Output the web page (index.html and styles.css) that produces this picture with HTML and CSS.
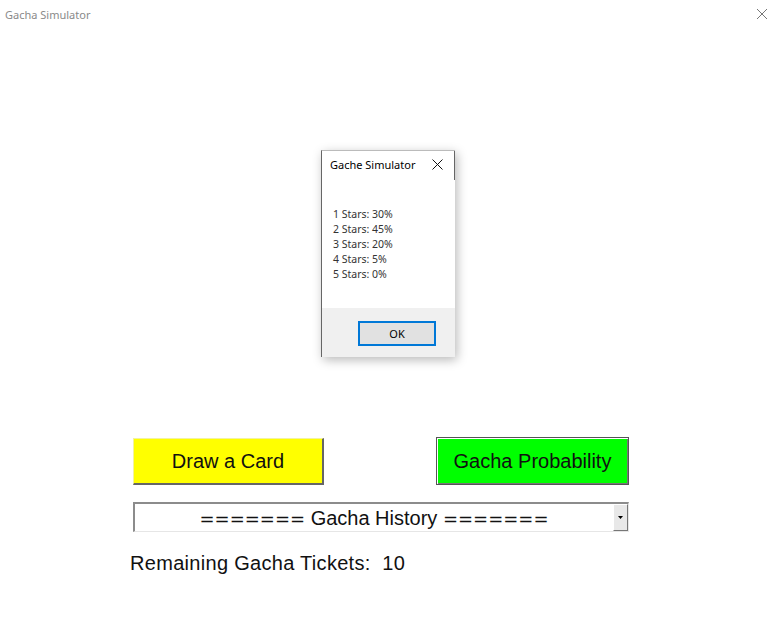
FILE: index.html
```html
<!DOCTYPE html>
<html>
<head>
<meta charset="utf-8">
<title>Gacha Simulator</title>
<link rel="stylesheet" href="styles.css">
</head>
<body>
<div class="window">
  <div class="titlebar">
    <span class="title">Gacha Simulator</span>
    <svg class="close" width="12" height="12" viewBox="0 0 12 12"><path d="M1 1L11 11M11 1L1 11" stroke="#777" stroke-width="1" fill="none"/></svg>
  </div>
  <div class="content">
    <div class="controls">
      <div class="btn-row">
        <button class="btn btn-draw">Draw a Card</button>
        <button class="btn btn-prob">Gacha Probability</button>
      </div>
      <div class="combo">
        <span class="combo-text"><span class="eq">=======</span> Gacha History <span class="eq">=======</span></span>
        <span class="combo-arrow"><svg width="5" height="3" viewBox="0 0 5 3"><path d="M0 0H5L2.5 3Z" fill="#000"/></svg></span>
      </div>
      <div class="tickets">Remaining Gacha Tickets:&nbsp;&nbsp;10</div>
    </div>
  </div>

  <div class="dialog">
    <div class="dlg-title">
      <span>Gache Simulator</span>
      <svg class="dlg-close" width="11" height="11" viewBox="0 0 11 11"><path d="M0.5 0.5L10.5 10.5M10.5 0.5L0.5 10.5" stroke="#111" stroke-width="1" fill="none"/></svg>
    </div>
    <div class="dlg-body">
      <div>1 Stars: 30%</div>
      <div>2 Stars: 45%</div>
      <div>3 Stars: 20%</div>
      <div>4 Stars: 5%</div>
      <div>5 Stars: 0%</div>
    </div>
    <div class="dlg-footer">
      <button class="ok">OK</button>
    </div>
  </div>
</div>
</body>
</html>
```
FILE: styles.css
```css
html, body {
  margin: 0;
  padding: 0;
  background: #fff;
}
.window {
  position: relative;
  width: 775px;
  height: 625px;
  background: #fff;
  overflow: hidden;
}
.titlebar {
  height: 28px;
  display: flex;
  align-items: center;
  justify-content: space-between;
  padding: 0 7px 0 5px;
}
.title {
  font-family: "Noto Sans", sans-serif;
  font-size: 11px;
  color: #8a8a8a;
}
.close {
  display: block;
}
.content {
  padding-top: 410px;
  padding-left: 133px;
}
.controls {
  width: 496px;
}
.btn-row {
  display: flex;
  justify-content: space-between;
  align-items: flex-start;
}
.btn {
  font-family: "Liberation Sans", Arial, sans-serif;
  font-size: 20px;
  color: #111;
  padding: 0;
  margin: 0;
  cursor: pointer;
}
.btn-draw {
  width: 191px;
  height: 47px;
  background: #ffff00;
  border: none;
  border-top: 1px solid #f2f2a0;
  border-left: 1px solid #f2f2a0;
  border-right: 2px solid #666;
  border-bottom: 2px solid #666;
}
.btn-prob {
  width: 193px;
  height: 48px;
  margin-top: -1px;
  background: #00ff00;
  border: 1px solid #555;
  box-shadow: inset 1px 1px 0 #fff, inset -1px -1px 0 #777;
}
.combo {
  margin-top: 17px;
  height: 30px;
  box-sizing: border-box;
  border-top: 2px solid #8c8c8c;
  border-left: 2px solid #8c8c8c;
  border-right: 1px solid #e6e6e6;
  border-bottom: 1px solid #e6e6e6;
  display: flex;
  align-items: stretch;
  background: #fff;
}
.combo-text {
  flex: 1;
  text-align: center;
  font-family: "Liberation Sans", Arial, sans-serif;
  font-size: 20px;
  line-height: 28px;
  color: #111;
}
.eq {
  font-family: "DejaVu Sans", sans-serif;
  font-size: 18px;
}
.combo-arrow {
  width: 15px;
  background: #e8e8e8;
  border-left: 1px solid #fff;
  border-top: 1px solid #fff;
  border-right: 1px solid #777;
  border-bottom: 1px solid #777;
  box-sizing: border-box;
  display: flex;
  align-items: center;
  justify-content: center;
}
.combo-arrow svg {
  display: block;
}
.tickets {
  margin-top: 19px;
  margin-left: -3px;
  font-family: "Liberation Sans", Arial, sans-serif;
  font-size: 20px;
  line-height: 24px;
  letter-spacing: 0.3px;
  color: #111;
}

/* modal dialog overlay */
.dialog {
  position: absolute;
  left: 321px;
  top: 150px;
  width: 134px;
  height: 207px;
  background: #fff;
  border-left: 1px solid #666;
  border-top: 1px solid #bbb;
  box-sizing: border-box;
  box-shadow: 2px 3px 10px rgba(0, 0, 0, 0.28);
  display: flex;
  flex-direction: column;
  font-family: "Noto Sans", sans-serif;
}
.dlg-title {
  height: 29px;
  box-sizing: border-box;
  padding: 0 11px 3px 8px;
  display: flex;
  align-items: center;
  justify-content: space-between;
  border-right: 1px solid #666;
  font-size: 11px;
  color: #000;
}
.dlg-close {
  display: block;
}
.dlg-body {
  flex: 1;
  padding: 27px 0 0 11px;
  font-size: 10.5px;
  line-height: 15px;
  color: #333;
}
.dlg-footer {
  height: 49px;
  background: #f0f0f0;
  display: flex;
  align-items: flex-start;
  padding: 13px 0 0 36px;
  box-sizing: border-box;
}
.ok {
  width: 78px;
  height: 25px;
  background: #e1e1e1;
  border: 2px solid #0078d7;
  font-family: "Noto Sans", sans-serif;
  font-size: 11px;
  color: #000;
  padding: 0;
  margin: 0;
}
```
